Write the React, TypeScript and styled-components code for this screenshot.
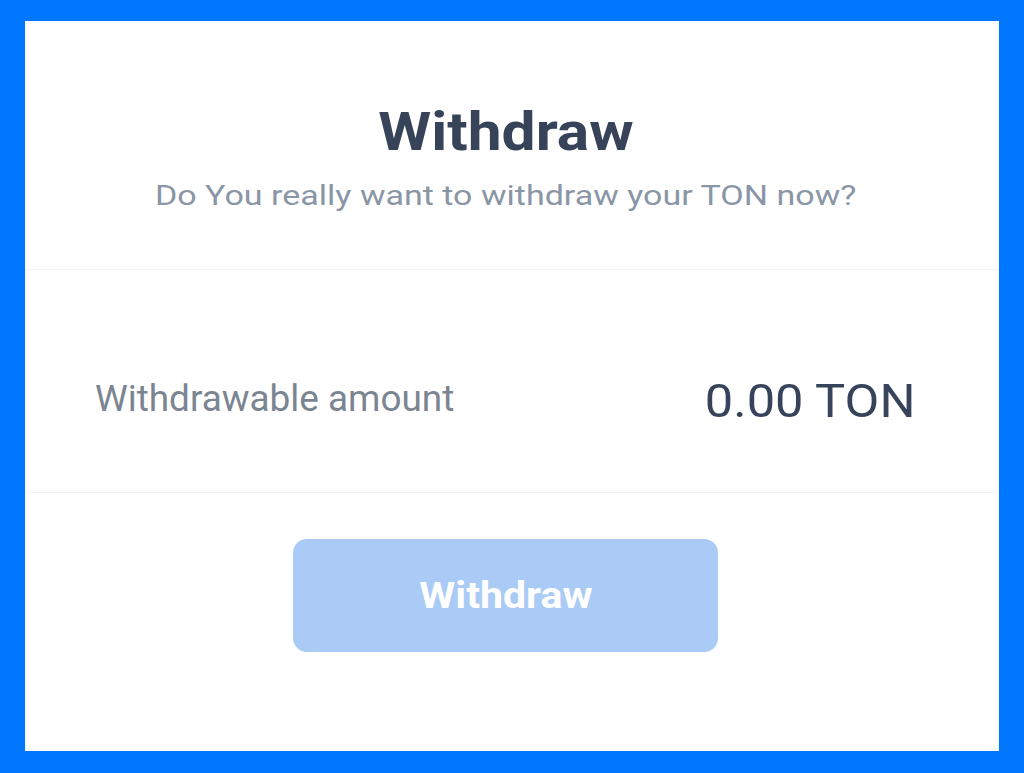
import React from "react";
import styled, { createGlobalStyle } from "styled-components";

const Global = createGlobalStyle`
  html, body { margin: 0; padding: 0; height: 100%; }
  body { background: #0077ff; font-family: Roboto, "Noto Sans", sans-serif; }
  #root { height: 100%; }
`;

const Frame = styled.div`
  box-sizing: border-box;
  width: 1024px;
  height: 773px;
  padding: 21px 25px 22px 25px;
  background: #0077ff;
`;

const Card = styled.div`
  height: 100%;
  background: #ffffff;
  display: flex;
  flex-direction: column;
`;

const Header = styled.div`
  height: 249px;
  box-sizing: border-box;
  padding: 79px 13px 0 0;
  display: flex;
  flex-direction: column;
  align-items: center;
  border-bottom: 1px solid #f1f2f5;
`;

const Wide = styled.span<{ $sx: number; $origin?: string }>`
  display: inline-block;
  white-space: nowrap;
  transform: scaleX(${(p) => p.$sx});
  transform-origin: ${(p) => p.$origin ?? "center"};
`;

const Title = styled.h1`
  margin: 0;
  font-size: 54px;
  line-height: 64px;
  font-weight: 700;
  color: #364358;
`;

const Subtitle = styled.p`
  margin: 15px 0 0;
  font-size: 28px;
  line-height: 34px;
  color: #8a96a5;
`;

const AmountRow = styled.div`
  height: 223px;
  box-sizing: border-box;
  display: flex;
  align-items: center;
  justify-content: space-between;
  padding: 38px 84px 0 70px;
  border-bottom: 1px solid #f1f2f5;
`;

const Label = styled.span`
  font-size: 36px;
  color: #7b8592;
  margin-top: -2px;
`;

const Amount = styled.span`
  font-size: 46px;
  color: #36435a;
  margin-top: 2px;
`;

const Footer = styled.div`
  display: flex;
  justify-content: center;
  padding: 46px 13px 0 0;
`;

const Button = styled.button`
  width: 425px;
  height: 113px;
  padding: 0;
  border: none;
  border-radius: 14px;
  background: #a9cbf6;
  color: #ffffff;
  font-family: Roboto, sans-serif;
  font-size: 36px;
  font-weight: 700;
`;

export default function App() {
  return (
    <>
      <Global />
      <Frame>
        <Card>
          <Header>
            <Title>
              <Wide $sx={1.12}>Withdraw</Wide>
            </Title>
            <Subtitle>
              <Wide $sx={1.215}>Do You really want to withdraw your TON now?</Wide>
            </Subtitle>
          </Header>
          <AmountRow>
            <Label>
              <Wide $sx={1.025} $origin="left">Withdrawable amount</Wide>
            </Label>
            <Amount>
              <Wide $sx={1.1} $origin="right">0.00 TON</Wide>
            </Amount>
          </AmountRow>
          <Footer>
            <Button disabled>
              <Wide $sx={1.14}>Withdraw</Wide>
            </Button>
          </Footer>
        </Card>
      </Frame>
    </>
  );
}
